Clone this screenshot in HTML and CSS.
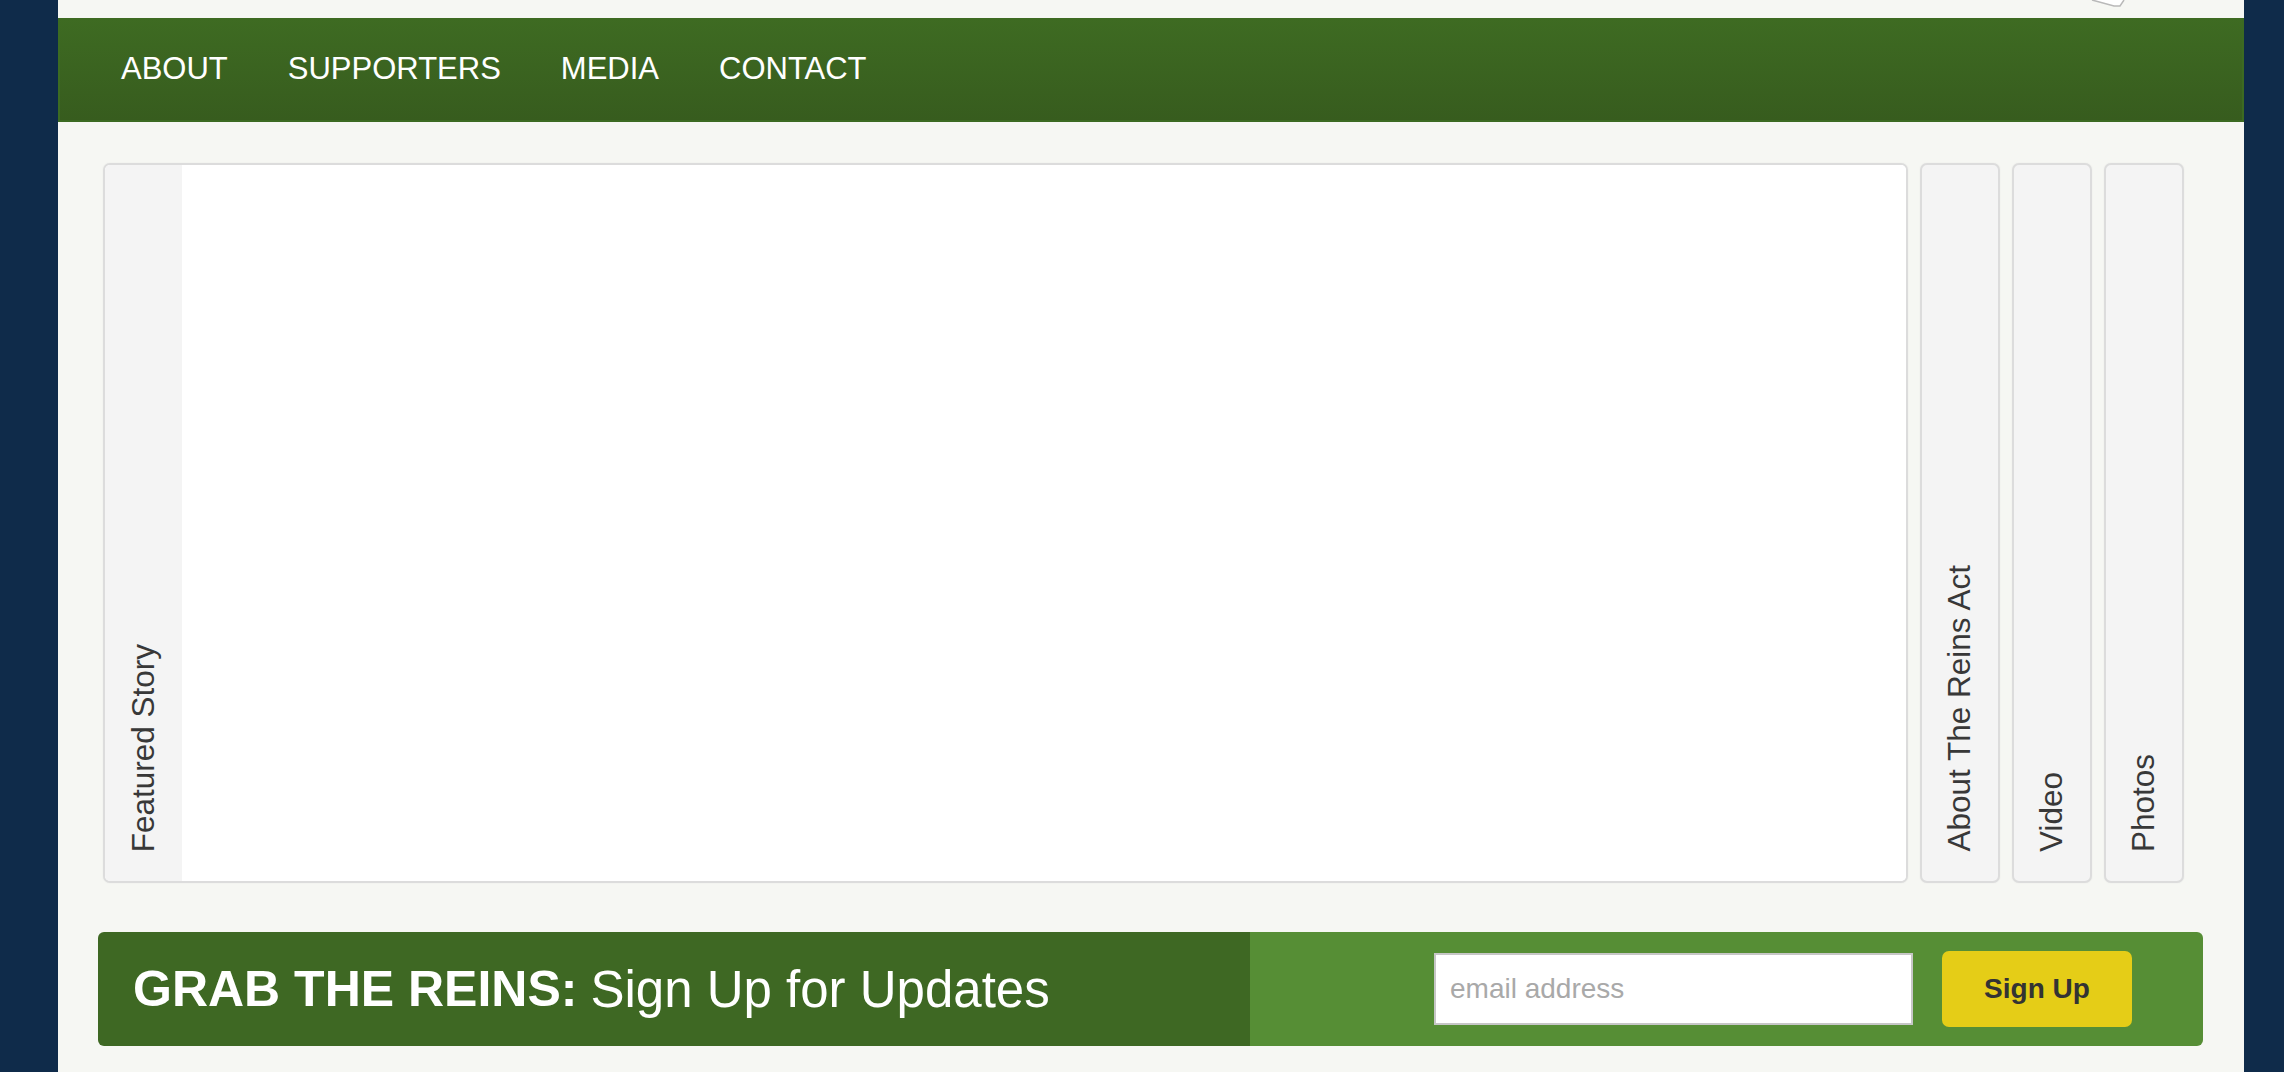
FILE: index.html
```html
<!DOCTYPE html>
<html lang="en">
<head>
<meta charset="utf-8">
<title>Grab The Reins</title>
<link rel="stylesheet" href="styles.css">
</head>
<body>
<div class="page">
  <header class="topbar">
    <svg class="logo-tail" width="44" height="8" viewBox="0 0 44 8" aria-hidden="true">
      <polygon points="2,0 24,6 30,6 34,0" fill="#ffffff"/>
      <polyline points="2,0 24,6 30,6 34,0" fill="none" stroke="#b9b9b9" stroke-width="1.5"/>
    </svg>
  </header>
  <nav class="mainnav">
    <a href="#" class="nav-link">ABOUT</a>
    <a href="#" class="nav-link">SUPPORTERS</a>
    <a href="#" class="nav-link">MEDIA</a>
    <a href="#" class="nav-link">CONTACT</a>
  </nav>
  <section class="showcase">
    <div class="panel panel-featured">
      <div class="tab-label"><span class="vtext">Featured Story</span></div>
      <div class="panel-body"></div>
    </div>
    <div class="panel tab-label tab-collapsed"><span class="vtext">About The Reins Act</span></div>
    <div class="panel tab-label tab-collapsed"><span class="vtext">Video</span></div>
    <div class="panel tab-label tab-collapsed"><span class="vtext">Photos</span></div>
  </section>
  <section class="signup">
    <h2 class="signup-title"><strong>GRAB THE REINS:</strong> Sign Up for Updates</h2>
    <form class="signup-form">
      <input class="signup-input" type="text" placeholder="email address">
      <button class="signup-button" type="button">Sign Up</button>
    </form>
  </section>
</div>
</body>
</html>
```
FILE: styles.css
```css
html, body {
  margin: 0;
  padding: 0;
}
body {
  background: #0f2b4a;
  font-family: "Liberation Sans", Arial, Helvetica, sans-serif;
}
.page {
  margin-left: 58px;
  width: 2186px;
  min-height: 1072px;
  background: #f6f7f3;
  overflow: hidden;
}
.topbar {
  height: 18px;
  display: flex;
  justify-content: flex-end;
  align-items: flex-start;
  padding-right: 110px;
}
.logo-tail {
  display: block;
}
.mainnav {
  height: 104px;
  box-sizing: border-box;
  display: flex;
  align-items: center;
  gap: 60px;
  padding-left: 61px;
  padding-bottom: 2px;
  background: linear-gradient(#3e6b22, #375c1e);
  border: 2px solid #3c6a22;
  border-top: none;
}
.nav-link {
  color: #ffffff;
  text-decoration: none;
  font-size: 31px;
  line-height: 1;
}
.showcase {
  display: flex;
  gap: 12px;
  height: 720px;
  padding: 41px 60px 0 45px;
}
.panel {
  box-sizing: border-box;
  border: 2px solid #dcdcdc;
  border-radius: 7px;
  box-shadow: 0 0 2px rgba(0, 0, 0, 0.06);
  background: #f4f4f4;
}
.panel-featured {
  flex: 1;
  display: flex;
  overflow: hidden;
  background: #ffffff;
}
.tab-label {
  width: 77px;
  flex: none;
  display: flex;
  flex-direction: column;
  justify-content: flex-end;
  align-items: center;
  padding-bottom: 29px;
  box-sizing: border-box;
  background: #f4f4f4;
}
.tab-collapsed {
  width: 80px;
}
.panel-body {
  flex: 1;
  background: #ffffff;
}
.vtext {
  writing-mode: vertical-rl;
  transform: rotate(180deg);
  font-size: 31.5px;
  line-height: 1;
  color: #383838;
  white-space: nowrap;
}
.signup {
  display: flex;
  height: 114px;
  margin: 49px 41px 0 40px;
  border-radius: 6px;
  overflow: hidden;
}
.signup-title {
  margin: 0;
  width: 1152px;
  box-sizing: border-box;
  padding-left: 35px;
  display: flex;
  align-items: center;
  gap: 13px;
  background: #3e6823;
  color: #ffffff;
  font-size: 51px;
  font-weight: normal;
  white-space: nowrap;
}
.signup-title strong {
  font-size: 50px;
  font-weight: bold;
}
.signup-form {
  flex: 1;
  display: flex;
  align-items: center;
  justify-content: flex-end;
  gap: 29px;
  padding-right: 71px;
  margin: 0;
  background: #568e35;
}
.signup-input {
  width: 479px;
  height: 72px;
  box-sizing: border-box;
  border: 2px solid #c6c6c6;
  background: #ffffff;
  padding: 0 14px;
  font-family: "Liberation Sans", Arial, sans-serif;
  font-size: 28px;
  color: #333333;
  outline: none;
}
.signup-input::placeholder {
  color: #a9a9a9;
}
.signup-button {
  width: 190px;
  height: 76px;
  border: none;
  border-radius: 7px;
  background: #e5cd17;
  color: #333333;
  font-family: "Liberation Sans", Arial, sans-serif;
  font-size: 28px;
  font-weight: bold;
  cursor: pointer;
}
```
